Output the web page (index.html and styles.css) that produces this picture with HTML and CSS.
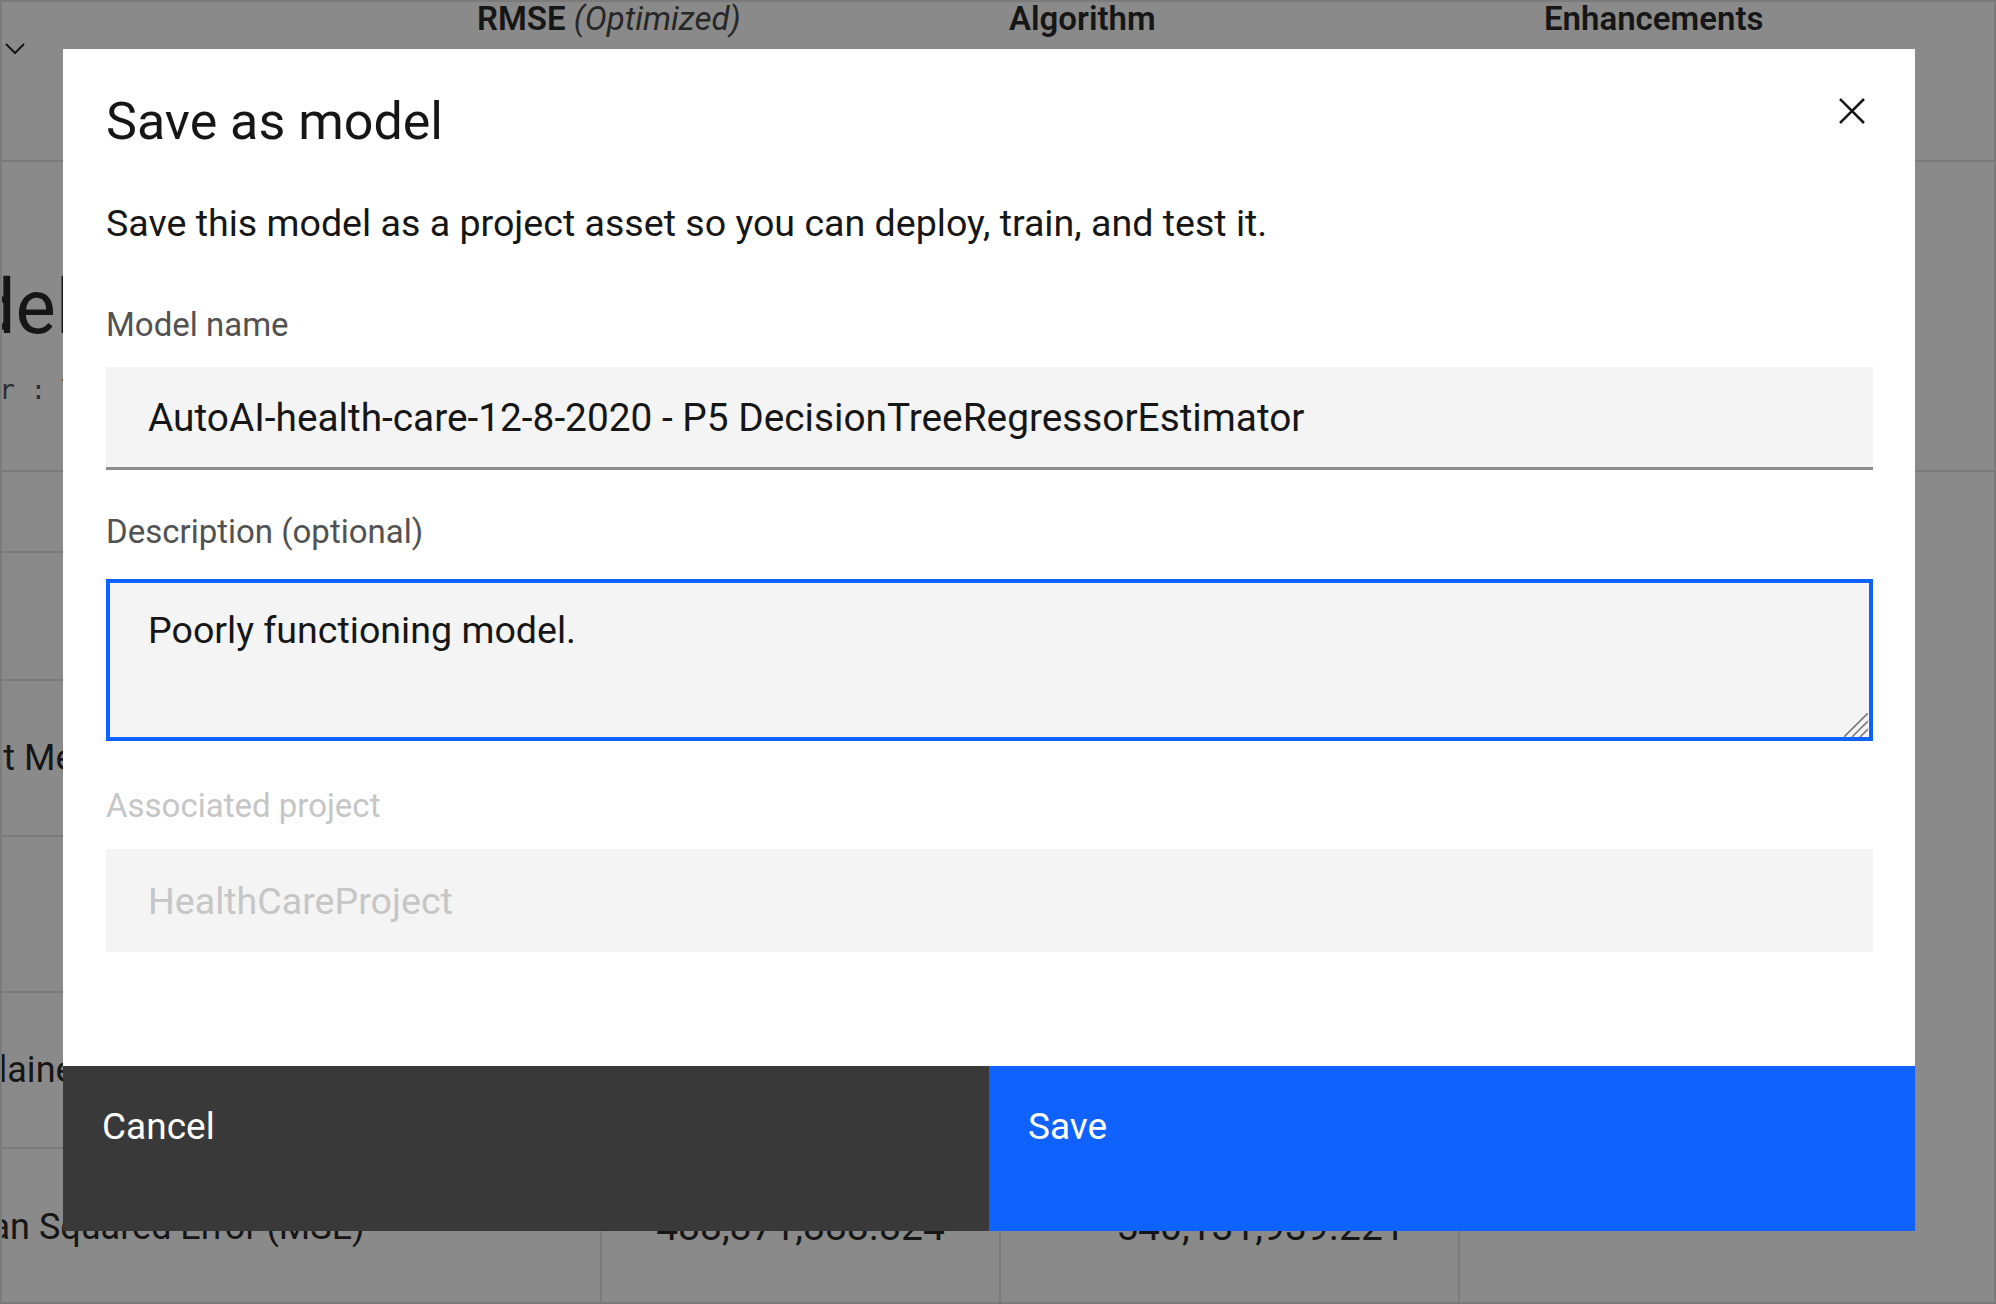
FILE: index.html
```html
<!DOCTYPE html>
<html lang="en">
<head>
<meta charset="utf-8">
<title>Save as model</title>
<link rel="stylesheet" href="styles.css">
</head>
<body>
<div class="page">
  <div class="thead">
    <div class="th-first"><svg class="chev" width="20" height="12" viewBox="0 0 20 12"><path d="M1 1 L10 10 L19 1" fill="none" stroke="#161616" stroke-width="2"/></svg></div>
    <div class="th"><b>RMSE</b> <i>(Optimized)</i></div>
    <div class="th"><b>Algorithm</b></div>
    <div class="th"><b>Enhancements</b></div>
  </div>
  <div class="section">
    <div class="big">Model information</div>
    <div class="sub">Estimator : Tree</div>
  </div>
  <div class="table">
    <div class="row r80"></div>
    <div class="row r128"></div>
    <div class="row r156"><div class="rlabel">Root Mean Squared Error (RMSE)</div></div>
    <div class="row r156"></div>
    <div class="row r156"><div class="rlabel">Explained Variance</div></div>
    <div class="row rlast">
      <div class="cell c1"><div class="rlabel">Mean Squared Error (MSE)</div></div>
      <div class="cell c2">488,871,888.824</div>
      <div class="cell c3">540,131,939.221</div>
      <div class="cell c4"></div>
    </div>
  </div>
</div>
<div class="overlay"></div>
<div class="modal" role="dialog">
  <button class="close" aria-label="Close"><svg width="26" height="26" viewBox="0 0 26 26"><path d="M1 1 L25 25 M25 1 L1 25" fill="none" stroke="#161616" stroke-width="2.6"/></svg></button>
  <div class="modal-body">
    <h2 class="title">Save as model</h2>
    <p class="desc">Save this model as a project asset so you can deploy, train, and test it.</p>
    <label class="flabel l1">Model name</label>
    <input class="tinput" type="text" value="AutoAI-health-care-12-8-2020 - P5 DecisionTreeRegressorEstimator">
    <label class="flabel l2">Description (optional)</label>
    <div class="tarea-wrap">
      <textarea class="tarea">Poorly functioning model.</textarea>
      <svg class="grip" width="24" height="24" viewBox="0 0 24 24"><path d="M24 0 L0 24 M24 8 L8 24 M24 16 L16 24" fill="none" stroke="#7a7a7a" stroke-width="1.6"/></svg>
    </div>
    <label class="flabel l3 disabled">Associated project</label>
    <input class="tinput dinput" type="text" value="HealthCareProject" disabled>
  </div>
  <div class="modal-footer">
    <button class="btn btn-secondary">Cancel</button>
    <button class="btn btn-primary">Save</button>
  </div>
</div>
</body>
</html>
```
FILE: styles.css
```css
html, body {
  margin: 0;
  padding: 0;
}
body {
  width: 1996px;
  height: 1304px;
  overflow: hidden;
  font-family: Roboto, "Liberation Sans", sans-serif;
  color: #161616;
  background: #ffffff;
}
.page {
  box-sizing: border-box;
  width: 1996px;
  height: 1304px;
  border: 2px solid #e0e0e0;
  overflow: hidden;
  background: #ffffff;
}
.thead {
  display: grid;
  grid-template-columns: 475px 532px 535px 1fr;
  height: 158px;
  border-bottom: 2px solid #e0e0e0;
}
.chev {
  display: block;
  margin: 41px 0 0 3px;
}
.th {
  font-size: 33px;
  line-height: 38px;
  margin-top: -2px;
  color: #161616;
}
.th b { font-weight: 600; }
.th i { font-weight: 400; color: #393939; }
.section {
  box-sizing: border-box;
  height: 310px;
  padding-top: 100px;
  border-bottom: 2px solid #e0e0e0;
}
.big {
  font-size: 76px;
  line-height: 90px;
  margin-left: -139px;
  white-space: nowrap;
}
.sub {
  font-family: "DejaVu Sans Mono", "Liberation Mono", monospace;
  font-size: 26px;
  line-height: 30px;
  margin: 23px 0 0 -128px;
  color: #3e4654;
  white-space: nowrap;
}
.table {
  width: 1880px;
}
.row {
  box-sizing: border-box;
  border-bottom: 2px solid #e0e0e0;
  display: flex;
  align-items: center;
}
.r80 { height: 81px; }
.r128 { height: 128px; }
.r156 { height: 156px; }
.rlast { height: 160px; border-bottom: none; align-items: stretch; }
.rlabel {
  font-size: 36px;
  line-height: 44px;
  margin-left: -62px;
  white-space: nowrap;
}
.cell {
  display: flex;
  align-items: center;
  justify-content: center;
  font-size: 39px;
  height: 154px;
  padding-top: 2px;
  box-sizing: border-box;
}
.c1 { width: 598px; justify-content: flex-start; }
.c2 { width: 399px; border-left: 2px solid #e0e0e0; }
.c3 { width: 459px; border-left: 2px solid #e0e0e0; padding-left: 62px; }
.c4 { flex: 1; border-left: 2px solid #e0e0e0; }

.overlay {
  position: fixed;
  inset: 0;
  background: rgba(22, 22, 22, 0.5);
}
.modal {
  position: absolute;
  left: 63px;
  top: 49px;
  width: 1852px;
  height: 1182px;
  background: #ffffff;
  display: flex;
  flex-direction: column;
}
.close {
  position: absolute;
  top: 30px;
  right: 31px;
  width: 64px;
  height: 64px;
  padding: 0;
  border: none;
  background: transparent;
  display: flex;
  align-items: center;
  justify-content: center;
}
.modal-body {
  flex: 1;
  padding: 43px 42px 0 43px;
  display: flex;
  flex-direction: column;
}
.title {
  margin: 0;
  font-size: 52px;
  line-height: 60px;
  font-weight: 400;
  color: #161616;
}
.desc {
  margin: 49px 0 0;
  font-size: 37.6px;
  line-height: 44px;
  color: #161616;
}
.flabel {
  display: block;
  font-size: 33px;
  line-height: 40px;
  color: #525252;
}
.l1 { margin-top: 60px; }
.l2 { margin-top: 42px; }
.l3 { margin-top: 45px; }
.flabel.disabled { color: #c6c6c6; }
.tinput {
  box-sizing: border-box;
  width: 100%;
  height: 103px;
  margin: 22px 0 0;
  padding: 0 42px;
  border: none;
  border-bottom: 3px solid #8d8d8d;
  background: #f4f4f4;
  font-family: Roboto, "Liberation Sans", sans-serif;
  font-size: 38.8px;
  color: #161616;
  outline: none;
}
.dinput {
  margin-top: 23px;
  border-bottom: none;
  font-size: 37.6px;
  color: #c6c6c6;
  -webkit-text-fill-color: #c6c6c6;
}
.tarea-wrap {
  position: relative;
  margin-top: 27px;
}
.tarea {
  box-sizing: border-box;
  width: 100%;
  height: 162px;
  margin: 0;
  padding: 25px 38px;
  border: 4px solid #0f62fe;
  background: #f4f4f4;
  font-family: Roboto, "Liberation Sans", sans-serif;
  font-size: 37.6px;
  line-height: 44px;
  color: #161616;
  resize: none;
  outline: none;
  display: block;
}
.grip {
  position: absolute;
  right: 5px;
  bottom: 4px;
}
.modal-footer {
  height: 165px;
  display: flex;
}
.btn {
  flex: 1;
  border: none;
  margin: 0;
  padding: 39px 39px 0;
  text-align: left;
  font-family: Roboto, "Liberation Sans", sans-serif;
  font-size: 37px;
  line-height: 44px;
  color: #ffffff;
  display: flex;
  align-items: flex-start;
}
.btn-secondary { background: #393939; }
.btn-primary { background: #0f62fe; }
```
